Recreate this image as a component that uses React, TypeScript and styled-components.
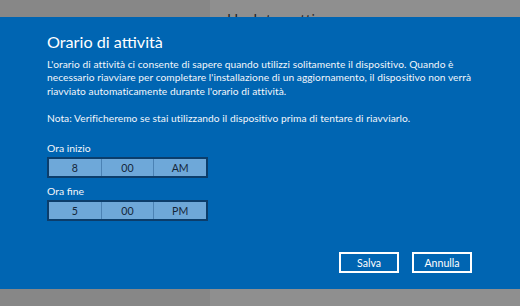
import React from "react";
import styled, { createGlobalStyle } from "styled-components";

const Global = createGlobalStyle`
  html, body { margin: 0; padding: 0; }
  body { width: 520px; height: 306px; overflow: hidden; font-family: Lato, "Open Sans", sans-serif; }
`;

const Page = styled.div`
  position: relative;
  width: 520px;
  height: 306px;
  display: flex;
  background: #8f8f8f;
`;

const Nav = styled.div`
  width: 210px;
  background: #878787;
`;

const Content = styled.div`
  flex: 1;
  padding: 11px 0 0 17px;
`;

const PageTitle = styled.div`
  font-size: 15.5px;
  line-height: 18px;
  color: #1c1c1c;
  font-family: "Open Sans", sans-serif;
`;

const Dialog = styled.div`
  position: absolute;
  left: 0;
  right: 0;
  top: 17px;
  height: 272px;
  background: #0065b2;
  color: #ffffff;
  padding: 13px 48px 0 47px;
  box-sizing: border-box;
  display: flex;
  flex-direction: column;
  font-family: Lato, "Open Sans", sans-serif;
`;

const Title = styled.h1`
  margin: 0;
  font-weight: 400;
  font-size: 16.2px;
  line-height: 24px;
`;

const Para = styled.p<{ $top: number }>`
  margin: 0;
  width: 440px;
  font-size: 10.2px;
  letter-spacing: 0.05px;
  line-height: 13.3px;
  color: #f2f6fb;
  margin-top: ${(p) => p.$top}px;
`;

const Label = styled.div<{ $top: number }>`
  font-size: 10.4px;
  line-height: 13px;
  color: #f2f6fb;
  margin-top: ${(p) => p.$top}px;
  margin-bottom: 2px;
`;

const Picker = styled.div`
  display: flex;
  width: 161px;
  height: 21px;
  box-sizing: border-box;
  border: 2px solid #0b3d6b;
  background: #6ea8d9;
`;

const Segment = styled.div`
  flex: 1;
  display: flex;
  align-items: center;
  justify-content: center;
  font-size: 10.6px;
  color: #14263a;
  & + & { border-left: 1px solid #4b82b4; }
`;

const Footer = styled.div`
  display: flex;
  justify-content: flex-end;
  gap: 13px;
  margin-top: auto;
  margin-bottom: 16px;
`;

const Button = styled.button`
  width: 60px;
  height: 21px;
  box-sizing: border-box;
  border: 2px solid #ffffff;
  background: transparent;
  color: #ffffff;
  font-family: Lato, "Open Sans", sans-serif;
  font-size: 10.6px;
  padding: 0;
`;

const TimePicker = ({ parts }: { parts: string[] }) => (
  <Picker>
    {parts.map((p, i) => (
      <Segment key={i}>{p}</Segment>
    ))}
  </Picker>
);

export default function App() {
  return (
    <>
      <Global />
      <Page>
        <Nav />
        <Content>
          <PageTitle>Update settings</PageTitle>
        </Content>
        <Dialog>
          <Title>Orario di attività</Title>
          <Para $top={4}>
            L'orario di attività ci consente di sapere quando utilizzi solitamente il dispositivo. Quando è necessario riavviare per completare l'installazione di un aggiornamento, il dispositivo non verrà riavviato automaticamente durante l'orario di attività.
          </Para>
          <Para $top={14}>
            Nota: Verificheremo se stai utilizzando il dispositivo prima di tentare di riavviarlo.
          </Para>
          <Label $top={17}>Ora inizio</Label>
          <TimePicker parts={["8", "00", "AM"]} />
          <Label $top={7}>Ora fine</Label>
          <TimePicker parts={["5", "00", "PM"]} />
          <Footer>
            <Button>Salva</Button>
            <Button>Annulla</Button>
          </Footer>
        </Dialog>
      </Page>
    </>
  );
}
